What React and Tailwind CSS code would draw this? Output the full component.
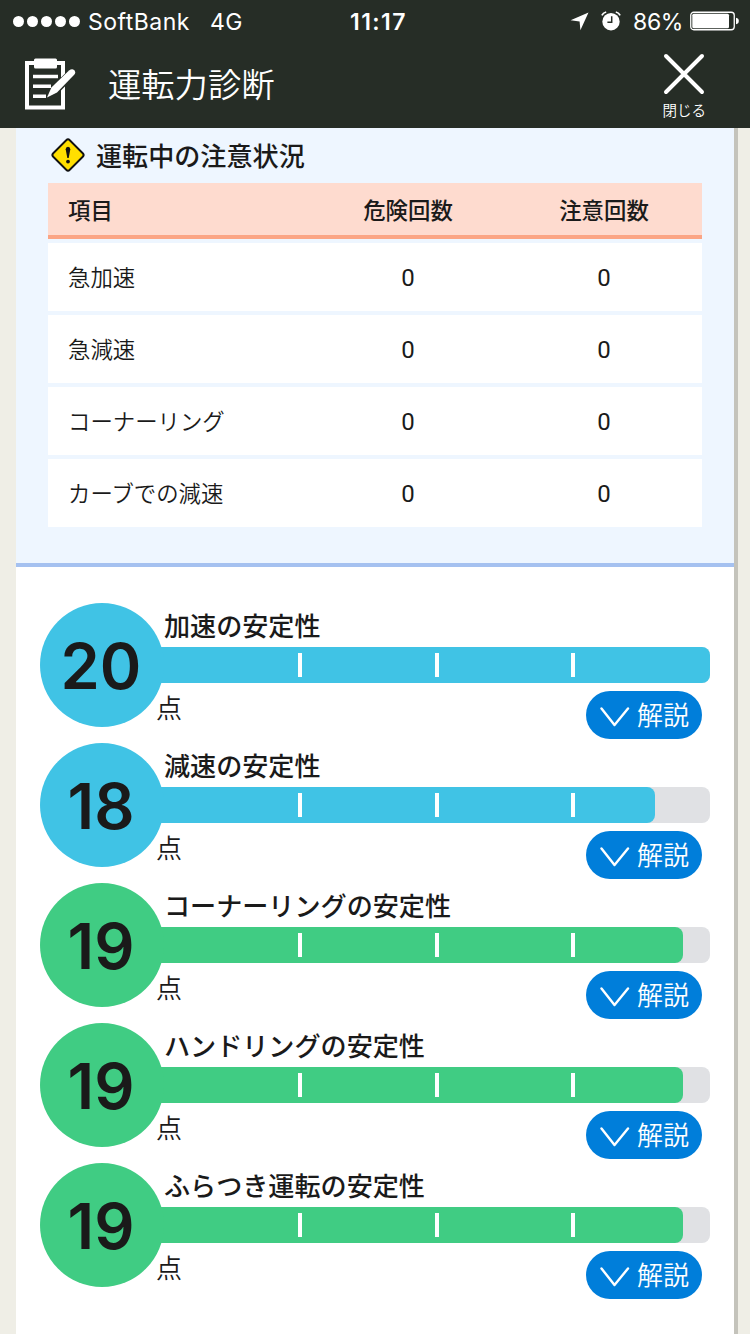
import React from "react";

const cautions = [
  { label: "急加速", danger: 0, warning: 0 },
  { label: "急減速", danger: 0, warning: 0 },
  { label: "コーナーリング", danger: 0, warning: 0 },
  { label: "カーブでの減速", danger: 0, warning: 0 },
];

const scores = [
  { label: "加速の安定性", score: 20, color: "bg-[#40c3e5]" },
  { label: "減速の安定性", score: 18, color: "bg-[#40c3e5]" },
  { label: "コーナーリングの安定性", score: 19, color: "bg-[#40cc83]" },
  { label: "ハンドリングの安定性", score: 19, color: "bg-[#40cc83]" },
  { label: "ふらつき運転の安定性", score: 19, color: "bg-[#40cc83]" },
];

const StatusBar = () => (
  <div className="grid grid-cols-[1fr_auto_1fr] items-center h-10 pl-[13px] pr-[11px] font-['Inter','Liberation_Sans',sans-serif] text-[23px] leading-10">
    <div className="flex items-center">
      <div className="flex gap-[3px]">
        {[0, 1, 2, 3, 4].map((dot) => (
          <span key={dot} className="w-[11px] h-[11px] rounded-full bg-white" />
        ))}
      </div>
      <span className="ml-2 pt-[2px] tracking-[0.5px]">SoftBank</span>
      <span className="ml-5 pt-[2px] tracking-[0.4px]">4G</span>
    </div>
    <span className="pl-[5px] pt-[2px] font-semibold text-[23px] tracking-[1.4px]">11:17</span>
    <div className="flex items-center justify-end">
      <svg width="19" height="19" viewBox="0 0 19 19" fill="white">
        <path d="M18.5 0.5 10.4 18.3 9.6 9.5 0.6 8.3Z" />
      </svg>
      <svg className="ml-3" width="20" height="20" viewBox="0 0 20 20">
        <circle cx="10" cy="10.7" r="8.7" fill="white" />
        <path d="M0.9 4.4Q2 1.8 5.2 1M19.1 4.4Q18 1.8 14.8 1" stroke="white" strokeWidth="1.7" fill="none" />
        <path d="M10.7 5.2V11.2H6.4" stroke="#262d26" strokeWidth="1.5" fill="none" />
      </svg>
      <span className="ml-3 pt-[2px] tracking-[-0.4px]">86%</span>
      <svg className="ml-[7px]" width="49" height="20" viewBox="0 0 49 20">
        <rect x="0.75" y="1.25" width="43.5" height="17.5" rx="3" fill="none" stroke="white" strokeWidth="1.3" />
        <rect x="2.3" y="2.8" width="36.7" height="14.4" rx="1.5" fill="white" />
        <path d="M46 6.8Q48.8 7.3 48.8 10T46 13.2Z" fill="white" />
      </svg>
    </div>
  </div>
);

const Header = () => (
  <header className="h-32 bg-[#262d26] text-white">
    <StatusBar />
    <div className="flex h-[88px] pl-6 pr-[44px]">
      <svg className="mt-[17px]" width="52" height="54" viewBox="0 0 52 54">
        <rect x="3" y="6" width="36" height="44.5" fill="none" stroke="white" strokeWidth="4" />
        <rect x="10" y="1.5" width="23" height="10" rx="1.5" fill="white" />
        <path d="M9 19.5H34M9 29.3H27M9 39.3H22" stroke="white" strokeWidth="3.4" />
        <path d="M48 16 31 33" stroke="#262d26" strokeWidth="9" strokeLinecap="round" />
        <path d="M45 13.6Q48.2 11 50.2 13.2T50.2 17.7L33 35.5 23 40.6 27.4 30.5Z" fill="white" />
      </svg>
      <h1 className="ml-8 mt-[18px] text-[33.3px] leading-[50px] font-[350]">運転力診断</h1>
      <button className="ml-auto mt-[13px] flex flex-col items-center">
        <svg width="42" height="42" viewBox="0 0 42 42">
          <path d="M3 3 39 39M39 3 3 39" stroke="white" strokeWidth="4" strokeLinecap="round" />
        </svg>
        <span className="mt-[5px] text-[14.5px] leading-5 font-[350]">閉じる</span>
      </button>
    </div>
  </header>
);

const CautionTable = () => (
  <section className="h-[439px] px-8 pt-[7px] bg-[#eef6ff] border-b-4 border-[#a5c1f0]">
    <div className="flex items-center h-10 pl-[2px]">
      <svg width="36" height="36" viewBox="0 0 36 36">
        <rect x="6.3" y="6.3" width="23.4" height="23.4" rx="2.5" transform="rotate(45 18 18)" fill="#ffdf00" stroke="#111" strokeWidth="1.9" />
        <path d="M15.7 12.2Q15.7 9.7 18 9.7T20.3 12.2L18.7 21H17.3Z" fill="#111" />
        <circle cx="18" cy="24.6" r="1.9" fill="#111" />
      </svg>
      <h2 className="ml-[10px] text-[26.1px] leading-10 font-medium">運転中の注意状況</h2>
    </div>
    <div className="mt-2 text-[22.4px]">
      <div className="grid grid-cols-[262px_196px_196px] items-center h-14 pt-[2px] bg-[#fedbcf] border-b-4 border-[#fba585] font-medium">
        <span className="pl-5">項目</span>
        <span className="text-center">危険回数</span>
        <span className="text-center">注意回数</span>
      </div>
      {cautions.map((item) => (
        <div key={item.label} className="grid grid-cols-[262px_196px_196px] items-center h-17 mt-1 pt-[2px] bg-white">
          <span className="pl-5 pb-[2px] font-[350]">{item.label}</span>
          <span className="text-center text-[24px] font-['Roboto','Liberation_Sans',sans-serif]">{item.danger}</span>
          <span className="text-center text-[24px] font-['Roboto','Liberation_Sans',sans-serif]">{item.warning}</span>
        </div>
      ))}
    </div>
  </section>
);

const ScoreRow = ({ label, score, color }) => (
  <div className="flex h-[140px]">
    <div
      className={`z-10 shrink-0 w-[124px] h-[124px] pt-[2px] pr-[2px] rounded-full flex items-center justify-center font-['Inter','Liberation_Sans',sans-serif] text-[63px] font-semibold ${color}`}
    >
      {score}
    </div>
    <div className="w-[546px]">
      <h3 className="h-11 pt-[2px] text-[26.1px] leading-10 font-medium">{label}</h3>
      <div className="flex h-9">
        <div className={`w-3 -ml-3 shrink-0 ${color}`} />
        <div className="relative w-[546px] shrink-0 rounded-r-lg bg-[#e0e1e4]">
          <div className={`h-9 rounded-r-lg ${color}`} style={{ width: `${(score / 20) * 100}%` }} />
          <span className="absolute top-[6px] left-[134px] w-1 h-6 bg-white" />
          <span className="absolute top-[6px] left-[271px] w-1 h-6 bg-white" />
          <span className="absolute top-[6px] left-[407px] w-1 h-6 bg-white" />
        </div>
      </div>
      <div className="flex justify-between pt-2 pr-2 text-[26px] font-[350]">
        <span className="-ml-2 leading-8">点</span>
        <button className="flex items-center w-29 h-12 pl-3.5 rounded-full bg-[#007eda] text-white">
          <svg className="mt-1" width="30" height="20" viewBox="0 0 30 20">
            <path d="M1.5 1.5 14.5 18 28 1.5" fill="none" stroke="white" strokeWidth="2.4" strokeLinecap="round" strokeLinejoin="round" />
          </svg>
          <span className="ml-[7px] leading-[46px] pb-[2px]">解説</span>
        </button>
      </div>
    </div>
  </div>
);

const App = () => {
  return (
    <div className="w-[750px] h-[1334px] overflow-hidden bg-[#efeee6] text-[#1a1a1a] font-['Noto_Sans_CJK_JP',sans-serif]">
      <Header />
      <main className="ml-4 w-[722px] h-[1206px] bg-white border-r-4 border-[#c4c3bb]">
        <CautionTable />
        <div className="pt-9 pl-6">
          {scores.map((item) => (
            <ScoreRow key={item.label} {...item} />
          ))}
        </div>
      </main>
    </div>
  );
};

export default App;
